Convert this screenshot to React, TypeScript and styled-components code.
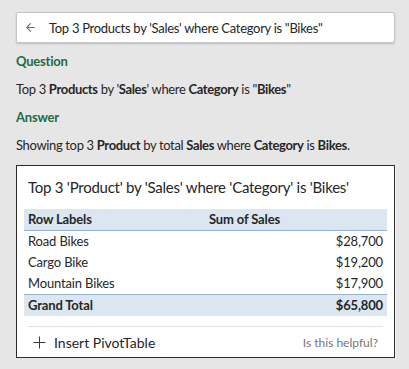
import styled, { createGlobalStyle } from "styled-components";

const GlobalStyle = createGlobalStyle`
  body {
    margin: 0;
    background: #e6e6e6;
    font-family: Lato, "Liberation Sans", sans-serif;
    color: #262626;
  }
`;

const Pane = styled.div`
  display: flex;
  flex-direction: column;
  padding: 12px 14px 0 16px;
  width: 409px;
  box-sizing: border-box;
`;

const SearchBox = styled.div`
  display: flex;
  align-items: center;
  gap: 14px;
  height: 31px;
  box-sizing: border-box;
  padding: 0 9px;
  background: #fff;
  border: 1px solid #c6c6c6;
  border-radius: 2px;
  box-shadow: 0 1px 2px rgba(0, 0, 0, 0.18);
  font-size: 13px;
  letter-spacing: -0.3px;
  color: #262626;
`;

const SectionLabel = styled.div`
  margin-top: 8px;
  line-height: 20px;
  font-size: 13px;
  font-weight: 700;
  letter-spacing: -0.2px;
  color: #1e6b45;
`;

const Sentence = styled.div`
  margin-top: 8px;
  line-height: 20px;
  font-size: 13px;
  letter-spacing: -0.35px;
  color: #262626;

  b {
    font-weight: 700;
  }
`;

const Card = styled.div`
  margin-top: 10px;
  background: #fff;
  border: 1px solid #2b2b2b;
  box-shadow: 1px 1px 0 #f5f5f5;
  padding: 11px 7px 0;
`;

const CardTitle = styled.div`
  padding-left: 4px;
  line-height: 20px;
  font-size: 15px;
  letter-spacing: -0.25px;
  color: #262626;
`;

const Table = styled.div`
  margin-top: 12px;
  display: grid;
  grid-template-columns: 181px 1fr;
  font-size: 13px;
`;

const Cell = styled.div<{ $right?: boolean; $head?: boolean; $total?: boolean }>`
  height: 21px;
  line-height: 21px;
  padding: 0 4px;
  text-align: ${(p) => (p.$right ? "right" : "left")};
  font-weight: ${(p) => (p.$head || p.$total ? 700 : 400)};
  letter-spacing: -0.15px;
  background: ${(p) => (p.$head || p.$total ? "#dce6f1" : "transparent")};
  border-bottom: ${(p) => (p.$head ? "1px solid #95b3d7" : "none")};
  border-top: ${(p) => (p.$total ? "1px solid #95b3d7" : "none")};
  color: #262626;
`;

const Footer = styled.div`
  margin: 10px 4px 0;
  border-top: 1px solid #e1e1e1;
  display: flex;
  align-items: center;
  justify-content: space-between;
  height: 30px;
`;

const InsertButton = styled.div`
  display: flex;
  align-items: center;
  gap: 8px;
  padding-left: 5px;
  font-size: 14px;
  color: #262626;
`;

const Helpful = styled.div`
  padding-right: 5px;
  font-size: 12px;
  color: #767676;
`;

const rows = [
  { label: "Road Bikes", value: "$28,700" },
  { label: "Cargo Bike", value: "$19,200" },
  { label: "Mountain Bikes", value: "$17,900" },
];

const App = () => {
  return (
    <>
      <GlobalStyle />
      <Pane>
        <SearchBox>
          <svg width="9" height="11" viewBox="0 0 9 11" fill="none" stroke="#6e6e6e" strokeWidth="1.1">
            <path d="M8.8 5.5H0.8M4.8 1.3L0.7 5.5L4.8 9.7" />
          </svg>
          <span>Top 3 Products by 'Sales' where Category is "Bikes"</span>
        </SearchBox>
        <SectionLabel>Question</SectionLabel>
        <Sentence>
          Top 3 <b>Products</b> by '<b>Sales</b>' where <b>Category</b> is "<b>Bikes</b>"
        </Sentence>
        <SectionLabel>Answer</SectionLabel>
        <Sentence>
          Showing top 3 <b>Product</b> by total <b>Sales</b> where <b>Category</b> is <b>Bikes</b>.
        </Sentence>
        <Card>
          <CardTitle>Top 3 'Product' by 'Sales' where 'Category' is 'Bikes'</CardTitle>
          <Table>
            <Cell $head>Row Labels</Cell>
            <Cell $head>Sum of Sales</Cell>
            {rows.map((r) => (
              <>
                <Cell key={r.label}>{r.label}</Cell>
                <Cell key={r.label + "v"} $right>
                  {r.value}
                </Cell>
              </>
            ))}
            <Cell $total>Grand Total</Cell>
            <Cell $total $right>
              $65,800
            </Cell>
          </Table>
          <Footer>
            <InsertButton>
              <svg width="13" height="13" viewBox="0 0 13 13" stroke="#3a3a3a" strokeWidth="1">
                <path d="M6.5 0.5V12.5M0.5 6.5H12.5" />
              </svg>
              Insert PivotTable
            </InsertButton>
            <Helpful>Is this helpful?</Helpful>
          </Footer>
        </Card>
      </Pane>
    </>
  );
};

export default App;
